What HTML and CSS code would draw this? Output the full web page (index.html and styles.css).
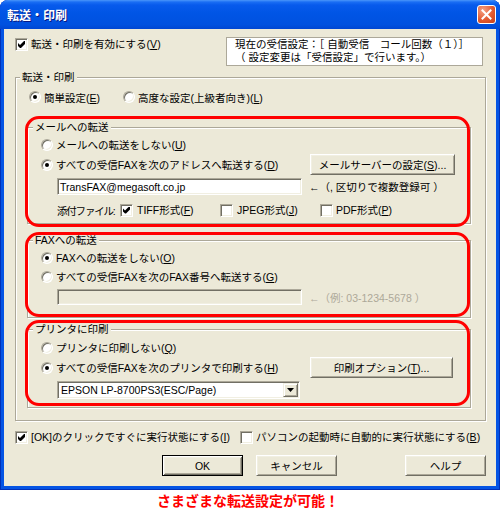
FILE: index.html
```html
<!DOCTYPE html>
<html lang="ja">
<head>
<meta charset="utf-8">
<title>転送・印刷</title>
<link rel="stylesheet" href="styles.css">
</head>
<body>
<div class="window">
  <div class="titlebar">
    <span class="title">転送・印刷</span>
    <span class="close"><svg width="11" height="11" viewBox="0 0 11 11"><path d="M1.5 1.5 L9.5 9.5 M9.5 1.5 L1.5 9.5" stroke="#fff" stroke-width="2" stroke-linecap="square"/></svg></span>
  </div>
  <div class="client">
    <div class="top-row">
      <label class="chk"><span class="box checked"></span><span>転送・印刷を有効にする(<u>V</u>)</span></label>
      <div class="info">
        <div>現在の受信設定：［ 自動受信　コール回数（１）］</div>
        <div>（ 設定変更は「受信設定」で行います。）</div>
      </div>
    </div>

    <fieldset class="group outer">
      <legend>転送・印刷</legend>
      <div class="gbody outer-body">
        <div class="mode-row">
          <label class="opt w94"><span class="radio on"></span><span>簡単設定(<u>E</u>)</span></label>
          <label class="opt"><span class="radio"></span><span>高度な設定(上級者向き)(<u>L</u>)</span></label>
        </div>

        <div class="hl hl-mail">
          <fieldset class="group inner">
            <legend>メールへの転送</legend>
            <div class="gbody mail-body">
              <div class="row">
                <label class="opt"><span class="radio"></span><span>メールへの転送をしない(<u>U</u>)</span></label>
              </div>
              <div class="row tall">
                <div class="lcell"><label class="opt"><span class="radio on"></span><span>すべての受信FAXを次のアドレスへ転送する(<u>D</u>)</span></label></div>
                <span class="btn w145">メールサーバーの設定(<u>S</u>)...</span>
              </div>
              <div class="row field-row">
                <span class="field indent">TransFAX@megasoft.co.jp</span>
                <span class="hint">←（, 区切りで複数登録可 ）</span>
              </div>
              <div class="row checks">
                <span class="att-label indent">添付ファイル:</span>
                <label class="chk cell"><span class="box checked"></span><span>TIFF形式(<u>F</u>)</span></label>
                <label class="chk cell"><span class="box"></span><span>JPEG形式(<u>J</u>)</span></label>
                <label class="chk"><span class="box"></span><span>PDF形式(<u>P</u>)</span></label>
              </div>
            </div>
          </fieldset>
        </div>

        <div class="hl hl-fax">
          <fieldset class="group inner">
            <legend>FAXへの転送</legend>
            <div class="gbody fax-body">
              <div class="row">
                <label class="opt"><span class="radio on"></span><span>FAXへの転送をしない(<u>O</u>)</span></label>
              </div>
              <div class="row">
                <label class="opt"><span class="radio"></span><span>すべての受信FAXを次のFAX番号へ転送する(<u>G</u>)</span></label>
              </div>
              <div class="row field-row">
                <span class="field indent disabled"></span>
                <span class="hint dim">←（例: 03-1234-5678 ）</span>
              </div>
            </div>
          </fieldset>
        </div>

        <div class="hl hl-print">
          <fieldset class="group inner">
            <legend>プリンタに印刷</legend>
            <div class="gbody print-body">
              <div class="row">
                <label class="opt"><span class="radio"></span><span>プリンタに印刷しない(<u>Q</u>)</span></label>
              </div>
              <div class="row tall">
                <div class="lcell"><label class="opt"><span class="radio on"></span><span>すべての受信FAXを次のプリンタで印刷する(<u>H</u>)</span></label></div>
                <span class="btn w143">印刷オプション(<u>T</u>)...</span>
              </div>
              <div class="combo indent">
                <span class="combo-text">EPSON LP-8700PS3(ESC/Page)</span>
                <span class="combo-btn"><svg width="7" height="4" viewBox="0 0 7 4"><path d="M0 0h7l-3.5 4z" fill="#000"/></svg></span>
              </div>
            </div>
          </fieldset>
        </div>
      </div>
    </fieldset>

    <div class="bottom-row">
      <label class="chk w225"><span class="box checked"></span><span>[OK]のクリックですぐに実行状態にする(<u>I</u>)</span></label>
      <label class="chk"><span class="box"></span><span>パソコンの起動時に自動的に実行状態にする(<u>B</u>)</span></label>
    </div>

    <div class="buttons">
      <span class="btn default">OK</span>
      <span class="btn">キャンセル</span>
      <span class="btn help">ヘルプ</span>
    </div>
  </div>
</div>
<div class="caption">さまざまな転送設定が可能！</div>
</body>
</html>
```

FILE: styles.css
```css
* { box-sizing: border-box; }

body {
  margin: 0;
  background: #fff;
  font-family: "Liberation Sans", "Noto Sans CJK JP", sans-serif;
  font-size: 10.5px;
  color: #000;
}

u { text-decoration: underline; text-underline-offset: 1px; }

/* window frame */
.window {
  width: 500px;
  height: 490px;
  display: flex;
  flex-direction: column;
  background: #0454e4;
  border-radius: 8px 8px 0 0;
  box-shadow: inset 1px 0 #0030b8, inset -1px 0 #0030b8, inset 0 -1px #0030b8;
}

.titlebar {
  height: 29px;
  flex: none;
  display: flex;
  align-items: center;
  padding: 0 4px 0 7px;
  border-radius: 8px 8px 0 0;
  background: linear-gradient(#4a96fa 0, #1a6ef4 2px, #075aec 5px, #0055e5 45%, #0051df 85%, #0046d2 100%);
}

.title {
  flex: 1;
  color: #fff;
  font: bold 12px "Noto Sans CJK JP", sans-serif;
  text-shadow: 1px 1px #0a1883;
}

.close {
  width: 19px;
  height: 19px;
  display: flex;
  align-items: center;
  justify-content: center;
  border: 1px solid #fff;
  border-radius: 3px;
  background: radial-gradient(circle at 30% 25%, #f4a184, #e35a31 55%, #c63f17);
}

.client {
  flex: 1;
  margin: 0 4px 4px;
  background: #ece9d8;
  padding: 8px 9px 0 11px;
  display: flex;
  flex-direction: column;
}

/* top row */
.top-row { display: flex; align-items: flex-start; }
.top-row .chk { margin-top: 1px; }

.info {
  margin-left: auto;
  margin-right: 4px;
  width: 257px;
  background: #fff;
  border: 1px solid #aca899;
  padding: 0 0 1px 8px;
  line-height: 13px;
  white-space: nowrap;
}

/* controls */
.chk, .opt {
  display: flex;
  align-items: center;
  gap: 3px;
  white-space: nowrap;
}
.chk { height: 13px; line-height: 13px; }

.box {
  width: 13px;
  height: 13px;
  flex: none;
  display: flex;
  align-items: center;
  justify-content: center;
  background: #fff;
  border: 1px solid;
  border-color: #aca899 #fff #fff #aca899;
  box-shadow: inset 1px 1px #716f64, inset -1px -1px #f1efe2;
}
.box.checked::after {
  content: "";
  width: 7px;
  height: 7px;
  background: #000;
  clip-path: polygon(0 2px, 2px 4px, 6px 0, 7px 0, 7px 3px, 3px 7px, 2px 7px, 0 5px);
}

.radio {
  width: 12px;
  height: 12px;
  flex: none;
  border-radius: 50%;
  display: flex;
  align-items: center;
  justify-content: center;
  background: #fff;
  border: 1px solid;
  border-color: #aca899 #fff #fff #aca899;
  box-shadow: inset 1px 1px #716f64, inset -1px -1px #f1efe2;
}
.radio.on::after {
  content: "";
  width: 4px;
  height: 4px;
  border-radius: 50%;
  background: #000;
}

.btn {
  width: 81px;
  height: 21px;
  flex: none;
  display: flex;
  align-items: center;
  justify-content: center;
  white-space: nowrap;
  background: #ece9d8;
  border: 1px solid;
  border-color: #fff #716f64 #716f64 #fff;
  box-shadow: inset 1px 1px #f1efe2, inset -1px -1px #aca899;
}
.btn.default {
  border-color: #000;
  box-shadow: inset 1px 1px #fff, inset -1px -1px #716f64, inset 2px 2px #f1efe2, inset -2px -2px #aca899;
}
.btn.w145 { width: 145px; }
.btn.w143 { width: 143px; }
.btn.help { margin-left: 55px; }

.field {
  width: 245px;
  height: 17px;
  display: flex;
  align-items: center;
  padding-left: 2px;
  background: #fff;
  border: 1px solid;
  border-color: #aca899 #fff #fff #aca899;
  box-shadow: inset 1px 1px #716f64, inset -1px -1px #f1efe2;
}
.field.disabled { background: #ece9d8; height: 16px; }

.hint { margin-left: 7px; white-space: nowrap; }
.hint.dim { color: #aca899; }

.combo {
  width: 243px;
  height: 18px;
  margin-top: 3px;
  display: flex;
  align-items: stretch;
  background: #fff;
  border: 1px solid;
  border-color: #aca899 #fff #fff #aca899;
  box-shadow: inset 1px 1px #716f64, inset -1px -1px #f1efe2;
  padding: 1px;
}
.combo-text { flex: 1; display: flex; align-items: center; padding-left: 2px; white-space: nowrap; }
.combo-btn {
  width: 15px;
  display: flex;
  align-items: center;
  justify-content: center;
  background: #ece9d8;
  border: 1px solid;
  border-color: #f1efe2 #716f64 #716f64 #f1efe2;
  box-shadow: inset 1px 1px #fff, inset -1px -1px #aca899;
}

/* group boxes */
.group {
  margin: 0;
  padding: 0;
  min-width: 0;
  border: 1px solid #aca899;
  box-shadow: inset 1px 1px #fff, 1px 1px #fff;
}
.group > legend {
  padding: 0 2px;
  margin-left: 5px;
  height: 14px;
  line-height: 14px;
  background: #ece9d8;
  white-space: nowrap;
}
.outer { margin: 4px 1px 0 0; }
.outer > legend { margin-left: 4px; }

.outer-body { padding: 4px 14px 12px 11px; }

.mode-row {
  display: flex;
  align-items: center;
  height: 18px;
  padding-left: 2px;
  margin-bottom: 14px;
}
.w94 { width: 94px; }

.gbody.mail-body { padding: 1px 0 4px 13px; }
.gbody.fax-body { padding: 1px 0 12px 13px; }
.gbody.print-body { padding: 2px 0 8px 13px; }

.row { display: flex; align-items: center; height: 19px; }
.row.tall { height: 21px; }
.row.field-row { margin-top: 3px; height: auto; }
.row.checks { margin-top: 6px; height: 18px; }
.lcell { width: 269px; flex: none; }
.indent { margin-left: 16px; }
.att-label { width: 63px; flex: none; white-space: nowrap; letter-spacing: -1.2px; }
.chk.cell { width: 100px; flex: none; gap: 4px; }

/* red highlight frames drawn over the inner group boxes */
.hl { position: relative; }
.hl::after {
  content: "";
  position: absolute;
  left: -2px;
  right: 1px;
  border: 3px solid #ff0000;
  border-radius: 14px;
  pointer-events: none;
}
.hl-mail::after { top: -4px; bottom: -3px; }
.hl-fax { margin-top: 9px; }
.hl-fax::after { top: -1px; bottom: 1px; }
.hl-print { margin-top: 4px; }
.hl-print::after { top: -2px; bottom: 2px; }

/* bottom */
.bottom-row {
  margin-top: 7px;
  height: 19px;
  display: flex;
  align-items: center;
}
.w225 { width: 225px; flex: none; }

.buttons {
  margin-top: 8px;
  display: flex;
  gap: 13px;
  padding-left: 147px;
}

.caption {
  height: 19px;
  line-height: 19px;
  text-align: center;
  padding-right: 4px;
  color: #ff0000;
  font: bold 14px "Noto Sans CJK JP", sans-serif;
}
```
